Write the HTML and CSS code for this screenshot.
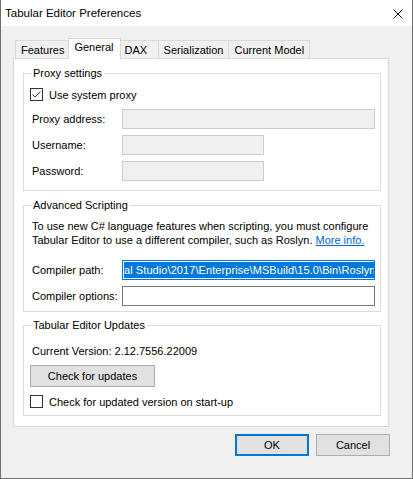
FILE: index.html
```html
<!DOCTYPE html>
<html>
<head>
    <meta charset="UTF-8">
    <title>Tabular Editor Preferences</title>
    <link rel="stylesheet" href="styles.css">
</head>
<body>
    <div class="window">
        <div class="titlebar">
            <span class="title">Tabular Editor Preferences</span>
            <svg class="close" width="10" height="10" viewBox="0 0 10 10">
                <path d="M0.5 0.5L9.5 9.5M9.5 0.5L0.5 9.5" stroke="#111" stroke-width="1"/>
            </svg>
        </div>

        <div class="client">
            <div class="tabs">
                <div class="tab">Features</div>
                <div class="tab active">General</div>
                <div class="tab">DAX</div>
                <div class="tab">Serialization</div>
                <div class="tab">Current Model</div>
            </div>

            <div class="tab-page">
                <div class="group group-proxy">
                    <div class="group-title">Proxy settings</div>
                    <label class="check-row first">
                        <span class="checkbox">
                            <svg width="11" height="11" viewBox="0 0 11 11">
                                <path d="M1.5 5.5L4 8L9.5 2.5" fill="none" stroke="#333" stroke-width="1"/>
                            </svg>
                        </span>
                        Use system proxy
                    </label>
                    <div class="field-row">
                        <span class="field-label">Proxy address:</span>
                        <div class="textbox disabled wide"></div>
                    </div>
                    <div class="field-row">
                        <span class="field-label">Username:</span>
                        <div class="textbox disabled short"></div>
                    </div>
                    <div class="field-row">
                        <span class="field-label">Password:</span>
                        <div class="textbox disabled short"></div>
                    </div>
                </div>

                <div class="group group-scripting">
                    <div class="group-title">Advanced Scripting</div>
                    <p class="note">To use new C# language features when scripting, you must configure Tabular Editor to use a different compiler, such as Roslyn. <a href="#">More info.</a></p>
                    <div class="field-row path-row">
                        <span class="field-label">Compiler path:</span>
                        <div class="textbox wide focused">
                            <span class="selected">al Studio\2017\Enterprise\MSBuild\15.0\Bin\Roslyn</span>
                        </div>
                    </div>
                    <div class="field-row">
                        <span class="field-label">Compiler options:</span>
                        <div class="textbox wide"></div>
                    </div>
                </div>

                <div class="group group-updates">
                    <div class="group-title">Tabular Editor Updates</div>
                    <div class="version">Current Version: 2.12.7556.22009</div>
                    <button class="btn btn-check">Check for updates</button>
                    <label class="check-row">
                        <span class="checkbox"></span>
                        Check for updated version on start-up
                    </label>
                </div>
            </div>

            <div class="dialog-buttons">
                <button class="btn btn-dialog default">OK</button>
                <button class="btn btn-dialog">Cancel</button>
            </div>
        </div>
    </div>
</body>
</html>
```

FILE: styles.css
```css
body {
    margin: 0;
    background: #f0f0f0;
    font-family: "Liberation Sans", Arial, sans-serif;
    font-size: 11px;
    color: #000;
}

.window {
    width: 413px;
    height: 479px;
    box-sizing: border-box;
    border: 1px solid #6f6f6f;
    border-top: none;
    background: #f0f0f0;
}

/* title bar */
.titlebar {
    height: 26px;
    background: #fff;
    display: flex;
    align-items: center;
    justify-content: space-between;
    padding: 0 9px 0 4px;
}

.title {
    font-size: 11.5px;
    margin-top: -1px;
}

.close {
    margin-top: 1px;
}

.client {
    padding: 12px 0 0 12px;
}

/* tab strip */
.tabs {
    display: flex;
    align-items: flex-end;
    height: 20px;
    padding-left: 3px;
    position: relative;
    z-index: 1;
}

.tab {
    height: 18px;
    min-width: 40px;
    box-sizing: border-box;
    border: 1px solid #d9d9d9;
    border-bottom: none;
    margin-left: -1px;
    padding: 3px 5px 0;
    background: #f0f0f0;
    line-height: 13px;
    white-space: nowrap;
}

.tab.active {
    height: 21px;
    margin: 0 -2px 0 -2px;
    padding: 2px 6px 0 5px;
    background: #fff;
    position: relative;
    top: 1px;
}

.tab.active + .tab {
    margin-left: 0;
}

.tab-page {
    width: 376px;
    height: 369px;
    box-sizing: border-box;
    border: 1px solid #d9d9d9;
    background: #fff;
    padding: 14px 0 0 9px;
}

/* group boxes */
.group {
    width: 358px;
    box-sizing: border-box;
    border: 1px solid #dcdcdc;
    padding: 0 5px 0 6px;
}

.group-proxy { height: 118px; }
.group-scripting { height: 107px; margin-top: 14px; }
.group-updates { height: 91px; margin-top: 13px; }

.group-title {
    width: max-content;
    margin: -7px 0 0 1px;
    padding: 0 2px;
    background: #fff;
    line-height: 13px;
}

.check-row {
    display: flex;
    align-items: center;
    gap: 6px;
    height: 13px;
    margin-top: 8px;
}

.checkbox {
    width: 13px;
    height: 13px;
    box-sizing: border-box;
    border: 1px solid #333;
    background: #fff;
    display: flex;
    align-items: center;
    justify-content: center;
}

.field-row {
    display: flex;
    align-items: center;
    margin-top: 6px;
}

.check-row.first + .field-row {
    margin-top: 8px;
}

.field-label {
    width: 90px;
    margin-left: 2px;
}

.textbox {
    height: 20px;
    box-sizing: border-box;
    border: 1px solid #7a7a7a;
    background: #fff;
}

.textbox.wide { width: 253px; }
.textbox.short { width: 142px; }

.textbox.disabled {
    border-color: #cccccc;
    background: #f0f0f0;
}

/* focused box with its whole text selected */
.textbox.focused {
    border-color: #0078d7;
    display: flex;
    align-items: center;
    overflow: hidden;
    padding: 0 1px;
}

.selected {
    flex: 1;
    white-space: nowrap;
    background: #0078d7;
    color: #fff;
    line-height: 16px;
    letter-spacing: 0.08px;
}

.note {
    margin: 7px 0 0 2px;
    line-height: 14px;
}

.note a {
    color: #0066cc;
}

.path-row {
    margin-top: 13px;
}

.version {
    margin: 12px 0 0 2px;
    line-height: 14px;
}

/* buttons */
.btn {
    font-family: inherit;
    font-size: 11px;
    color: #000;
    background: #e1e1e1;
    border: 1px solid #adadad;
    box-sizing: border-box;
    padding: 0;
}

.btn-check {
    display: block;
    width: 125px;
    height: 22px;
    margin-top: 7px;
}

.dialog-buttons {
    display: flex;
    gap: 7px;
    margin: 7px 0 0 222px;
}

.btn-dialog {
    width: 74px;
    height: 22px;
}

.btn-dialog.default {
    border: 2px solid #0078d7;
}
```
